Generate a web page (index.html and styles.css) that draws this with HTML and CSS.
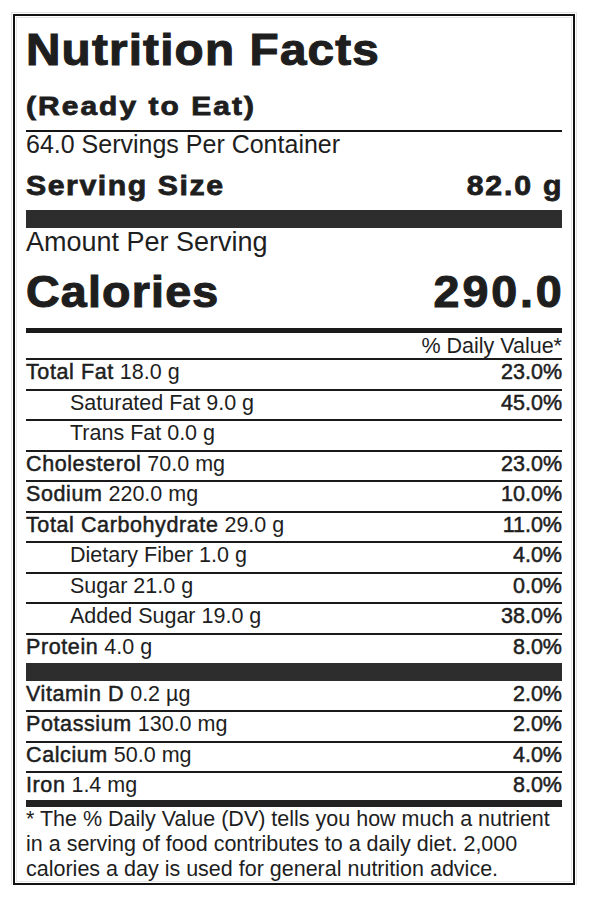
FILE: index.html
```html
<!DOCTYPE html>
<html lang="en">
<head>
<meta charset="utf-8">
<title>Nutrition Facts</title>
<link rel="stylesheet" href="styles.css">
</head>
<body>
<div class="label">
  <h1 class="title"><span class="wide">Nutrition Facts</span></h1>
  <div class="subtitle"><span class="wide">(Ready to Eat)</span></div>
  <div class="servings">64.0 Servings Per Container</div>
  <div class="serving-size"><span class="wide">Serving Size</span><span class="wide num">82.0 g</span></div>
  <div class="bar bar-lg"></div>
  <div class="amount">Amount Per Serving</div>
  <div class="calories"><span class="wide">Calories</span><span class="wide num">290.0</span></div>
  <div class="dv-head">% Daily Value*</div>

  <div class="row"><span class="name"><b>Total Fat</b> 18.0 g</span><b class="pct">23.0%</b></div>
  <div class="row sub"><span class="name">Saturated Fat 9.0 g</span><b class="pct">45.0%</b></div>
  <div class="row sub"><span class="name">Trans Fat 0.0 g</span></div>
  <div class="row"><span class="name"><b>Cholesterol</b> 70.0 mg</span><b class="pct">23.0%</b></div>
  <div class="row"><span class="name"><b>Sodium</b> 220.0 mg</span><b class="pct">10.0%</b></div>
  <div class="row"><span class="name"><b>Total Carbohydrate</b> 29.0 g</span><b class="pct">11.0%</b></div>
  <div class="row sub"><span class="name">Dietary Fiber 1.0 g</span><b class="pct">4.0%</b></div>
  <div class="row sub"><span class="name">Sugar 21.0 g</span><b class="pct">0.0%</b></div>
  <div class="row sub"><span class="name">Added Sugar 19.0 g</span><b class="pct">38.0%</b></div>
  <div class="row"><span class="name"><b>Protein</b> 4.0 g</span><b class="pct">8.0%</b></div>

  <div class="bar bar-lg"></div>

  <div class="row after-bar"><span class="name"><b>Vitamin D</b> 0.2 µg</span><b class="pct">2.0%</b></div>
  <div class="row"><span class="name"><b>Potassium</b> 130.0 mg</span><b class="pct">2.0%</b></div>
  <div class="row"><span class="name"><b>Calcium</b> 50.0 mg</span><b class="pct">4.0%</b></div>
  <div class="row before-bar"><span class="name"><b>Iron</b> 1.4 mg</span><b class="pct">8.0%</b></div>

  <div class="bar bar-sm"></div>

  <p class="footnote">* The % Daily Value (DV) tells you how much a nutrient<br>in a serving of food contributes to a daily diet. 2,000<br>calories a day is used for general nutrition advice.</p>
</div>
</body>
</html>
```

FILE: styles.css
```css
* {
  box-sizing: border-box;
  margin: 0;
  padding: 0;
}

body {
  margin: 0;
  background: #fff;
  font-family: "Liberation Sans", Arial, Helvetica, sans-serif;
  color: #1e1e1e;
}

.label {
  margin: 14px 0 0 13px;
  width: 562px;
  border: 2px solid #111;
  padding: 0 11px 1px;
  box-shadow: 0 0 0 1px #fff, 0 0 0 2px #e2e2e2,
              inset 0 0 0 1px #fff, inset 0 0 0 2px #e6e6e6;
}

/* heavy, wide display type */
.wide {
  display: inline-block;
  transform-origin: left center;
  white-space: nowrap;
}

.num.wide {
  transform-origin: right center;
}

.title {
  font-size: 45px;
  font-weight: 700;
  line-height: 56px;
  padding-top: 6px;
  -webkit-text-stroke: 1.1px #1e1e1e;
}

.title .wide {
  letter-spacing: 1.1px;
  transform: scaleX(1.06);
}

.subtitle {
  font-size: 26px;
  font-weight: 700;
  line-height: 48px;
  padding-top: 4px;
  border-bottom: 2px solid #151515;
  -webkit-text-stroke: 0.8px #1e1e1e;
}

.subtitle .wide {
  letter-spacing: 1.8px;
  transform: scaleX(1.15);
}

.servings {
  font-size: 25px;
  line-height: 25px;
}

.serving-size {
  display: flex;
  justify-content: space-between;
  font-size: 27px;
  font-weight: 700;
  line-height: 34px;
  padding: 12px 0 7px;
  -webkit-text-stroke: 0.8px #1e1e1e;
}

.serving-size .wide {
  letter-spacing: 1.4px;
  transform: scaleX(1.12);
}

.serving-size .num {
  letter-spacing: 1.65px;
  margin-right: -1.65px;
}

.bar {
  background: #2d2d2d;
}

.bar-lg {
  height: 18px;
}

.bar-sm {
  height: 7px;
  background: #222;
}

.amount {
  font-size: 27px;
  line-height: 28px;
}

.calories {
  display: flex;
  justify-content: space-between;
  font-size: 44px;
  font-weight: 700;
  line-height: 50px;
  padding: 11px 0;
  border-bottom: 5px solid #1a1a1a;
  -webkit-text-stroke: 1.1px #1e1e1e;
}

.calories .wide {
  letter-spacing: 1.1px;
  transform: scaleX(1.06);
}

.calories .num {
  letter-spacing: 2.7px;
  margin-right: -2.7px;
}

.dv-head {
  text-align: right;
  font-size: 21.5px;
  line-height: 23px;
  padding-top: 2px;
}

.row {
  display: flex;
  justify-content: space-between;
  font-size: 21.5px;
  line-height: 24px;
  border-top: 2px solid #1a1a1a;
  padding-bottom: 4.5px;
  white-space: nowrap;
}

.row b {
  font-weight: 400;
  -webkit-text-stroke: 0.5px #1e1e1e;
}

.row .name b {
  letter-spacing: 0.6px;
}

.row.sub .name {
  padding-left: 44px;
}

.row.after-bar {
  border-top: none;
  padding-top: 1px;
  padding-bottom: 4px;
}

.row.before-bar {
  padding-bottom: 3px;
}

.footnote {
  font-size: 21.5px;
  line-height: 25px;
  white-space: nowrap;
}
```
